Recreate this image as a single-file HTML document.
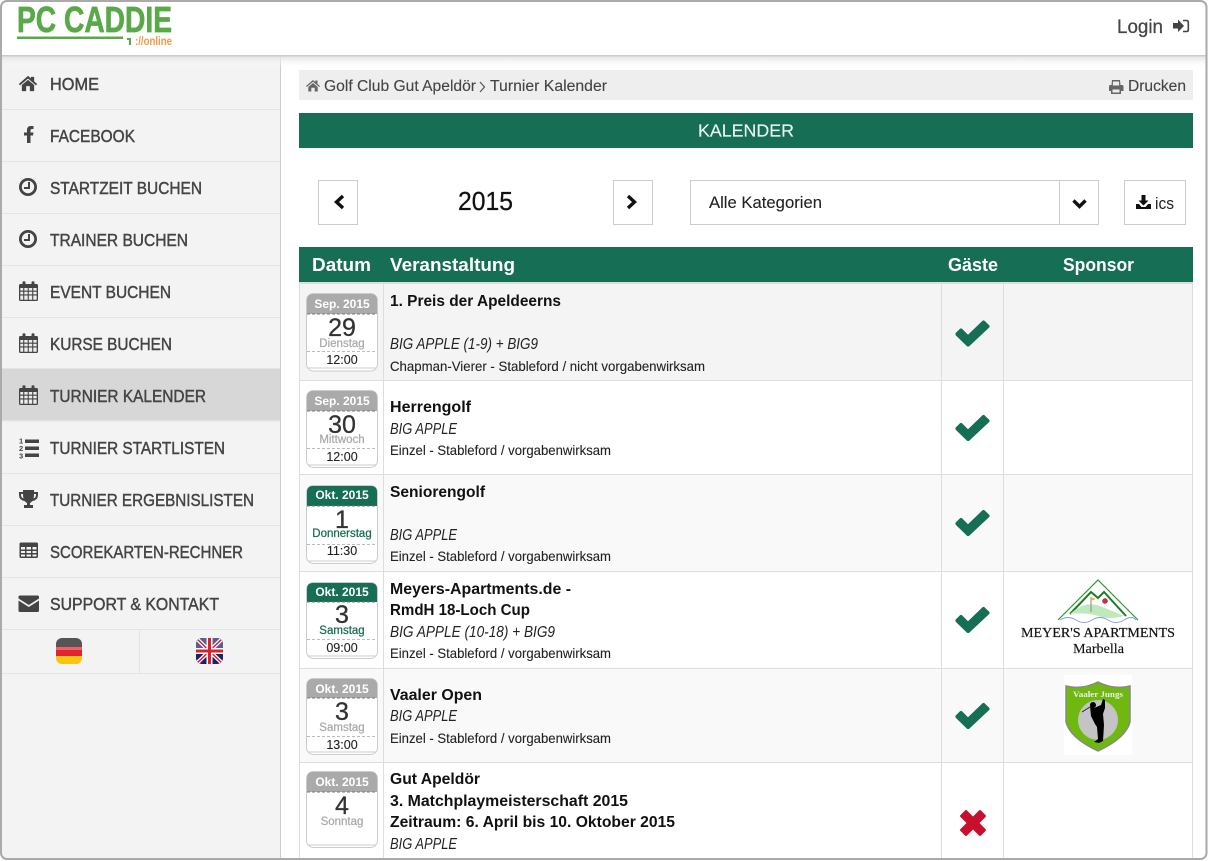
<!DOCTYPE html>
<html lang="de"><head><meta charset="utf-8"><title>Turnier Kalender</title>
<style>
html,body{margin:0;padding:0;background:#fff;overflow:hidden}
svg{display:block}
text{font-family:"Liberation Sans",sans-serif;white-space:pre}
.m{font-size:17.5px;fill:#444;stroke:#444;stroke-width:.45}
.t{font-size:16px;font-weight:bold;fill:#111}
.i{font-size:15.5px;font-style:italic;fill:#222}
.d{font-size:14px;fill:#222;stroke:#222;stroke-width:.1}
.h{font-size:18px;font-weight:bold;fill:#fff}
.ch{font-size:12px;font-weight:bold;fill:#fff;text-anchor:middle}
.cn{font-size:25px;fill:#333;stroke:#333;stroke-width:.3;text-anchor:middle}
.cw{font-size:11.500px;fill:#aaa;stroke:#aaa;stroke-width:.25;text-anchor:middle}
.cg{font-size:11.500px;fill:#166e55;stroke:#166e55;stroke-width:.25;text-anchor:middle}
.ct{font-size:12.500px;fill:#222;stroke:#222;stroke-width:.1;text-anchor:middle}
</style></head><body>
<svg xmlns="http://www.w3.org/2000/svg" width="1208" height="861" viewBox="0 0 1208 861">
<defs>
<linearGradient id="sh" x1="0" y1="0" x2="0" y2="1"><stop offset="0" stop-color="#e2e2e2"/><stop offset="1" stop-color="#fff" stop-opacity="0"/></linearGradient>
<symbol id="cal" viewBox="0 0 19 20" overflow="visible"><path fill="#444" d="M1.500 3H3.500V1.500Q3.500 .3 5 .3T6.500 1.500V3H12.500V1.500Q12.500 .3 14 .3T15.500 1.500V3H17.500Q19 3 19 4.500V18.500Q19 20 17.500 20H1.500Q0 20 0 18.500V4.500Q0 3 1.500 3Z"/><path fill="#ececec" d="M1.300 7H4.200V9.600H1.300ZM5.300 7H8.700V9.600H5.300ZM9.800 7H13.200V9.600H9.800ZM14.300 7H17.700V9.600H14.300ZM1.300 10.700H4.200V13.400H1.300ZM5.300 10.700H8.700V13.400H5.300ZM9.800 10.700H13.200V13.400H9.800ZM14.300 10.700H17.700V13.400H14.300ZM1.300 14.500H4.200V18.700H1.300ZM5.300 14.500H8.700V18.700H5.300ZM9.800 14.500H13.200V18.700H9.800ZM14.300 14.500H17.700V18.700H14.300Z"/></symbol>
<symbol id="chk" viewBox="0 0 35 27" overflow="visible"><path fill="#166e55" d="M.7 13L5 8.800Q6 8 7 8.800L13 14.800L27.500 .8Q28.500 0 29.500 .8L34.300 5.400Q35 6.400 34.300 7.400L14.200 26.200Q13 27 12 26.200L.7 15.200Q0 14 .7 13Z"/></symbol>
<symbol id="clk" viewBox="0 0 18 18" overflow="visible"><circle cx="9" cy="9" r="7.600" fill="none" stroke="#444" stroke-width="2.800"/><path d="M10 4V10H5" fill="none" stroke="#444" stroke-width="2"/></symbol>
</defs>

<rect x="0" y="0" width="1208" height="861" fill="#fff"/>
<!-- sidebar -->
<rect x="2" y="56" width="278" height="804" fill="#f3f3f3"/>
<rect x="280" y="56" width="1" height="804" fill="#ccc"/>
<rect x="2" y="369" width="278" height="51" fill="#d7d7d7"/>
<rect x="2" y="56" width="1204" height="12" fill="url(#sh)"/>
<rect x="2" y="55" width="1204" height="1.500" fill="#ccc"/>
<g fill="#e4e4e4">
<rect x="2" y="109" width="278" height="1"/><rect x="2" y="161" width="278" height="1"/><rect x="2" y="213" width="278" height="1"/><rect x="2" y="265" width="278" height="1"/><rect x="2" y="317" width="278" height="1"/><rect x="2" y="368" width="278" height="1"/><rect x="2" y="420" width="278" height="1.500"/><rect x="2" y="473" width="278" height="1"/><rect x="2" y="525" width="278" height="1"/><rect x="2" y="577" width="278" height="1"/><rect x="2" y="629" width="278" height="1"/><rect x="2" y="673" width="278" height="1"/><rect x="139" y="630" width="1" height="43"/>
</g>

<!-- logo -->
<text x="17" y="32" font-size="36" font-weight="bold" fill="#59a948" stroke="#59a948" stroke-width=".7" textLength="155" lengthAdjust="spacingAndGlyphs">PC CADDIE</text>
<rect x="17" y="36.500" width="106" height="2.500" fill="#59a948"/>
<path d="M127 38H131V45H129V40H127Z" fill="#59a948"/>
<text x="135" y="45" font-size="11.500" font-weight="bold" fill="#ef9a45" textLength="37" lengthAdjust="spacingAndGlyphs">://online</text>

<!-- login -->
<text x="1117" y="33" font-size="19" fill="#444" stroke="#444" stroke-width=".25" textLength="46" lengthAdjust="spacingAndGlyphs">Login</text>
<path fill="#444" d="M1173 23H1178V19.500L1184 26L1178 32V28.500H1173Z"/>
<path fill="none" stroke="#444" stroke-width="1.600" d="M1183 20.500H1186.500Q1188.300 20.500 1188.300 22.300V29.700Q1188.300 31.500 1186.500 31.500H1183"/>

<!-- menu icons -->
<path fill="#444" d="M19 84L28 76L31 78.600V77H34V81.400L37 84L36 85.200L28 78.400L20 85.200ZM22 85L28 80L34 85V91H30V86H26V91H22Z" stroke="#444" stroke-width=".3"/>
<path fill="#444" d="M27 143V135.500H24V132.500H27V130Q27 126 31 126H33.500V129H32Q30.500 129 30.500 130.500V132.500H33.500L33 135.500H30.500V143Z"/>
<use href="#clk" x="19" y="178" width="18" height="18"/>
<use href="#clk" x="19" y="230" width="18" height="18"/>
<use href="#cal" x="19" y="281" width="19" height="20"/>
<use href="#cal" x="19" y="333" width="19" height="20"/>
<use href="#cal" x="19" y="385" width="19" height="20"/>
<path fill="#444" d="M25 439.500H39V443H25ZM25 446.500H39V450H25ZM25 453.500H39V457H25Z"/>
<g font-size="7.500" font-weight="bold" fill="#444"><text x="19" y="443.500">1</text><text x="19" y="451">2</text><text x="19" y="458.500">3</text></g>
<path fill="#444" d="M23 490H34V492H38V495Q38 500 32.500 501Q31 502.500 30 503V505H33V508H24V505H27V503Q26 502.500 24.500 501Q19 500 19 495V492H23ZM21 494V495Q21 497.500 23.500 498.500Q23 496.500 23 494ZM36 494H34Q34 496.500 33.500 498.500Q36 497.500 36 495Z"/>
<path fill="#444" fill-rule="evenodd" d="M21 542.500H36.500Q38 542.500 38 544V556.500Q38 558 36.500 558H21Q19.500 558 19.500 556.500V544Q19.500 542.500 21 542.500ZM21 547V549.500H25V547ZM26.500 547V549.500H31V547ZM32.500 547V549.500H36.500V547ZM21 551V553H25V551ZM26.500 551V553H31V551ZM32.500 551V553H36.500V551ZM21 554.500V556.500H25V554.500ZM26.500 554.500V556.500H31V554.500ZM32.500 554.500V556.500H36.500V554.500Z"/>
<path fill="#444" d="M20 595.500H37.500Q39 595.500 39 597V598.500L28.800 605L18.500 598.500V597Q18.500 595.500 20 595.500ZM18.500 600.500L28.800 607L39 600.500V610.500Q39 612 37.500 612H20Q18.500 612 18.500 610.500Z"/>

<!-- menu text -->
<text class="m" x="50" y="90" textLength="49" lengthAdjust="spacingAndGlyphs">HOME</text>
<text class="m" x="50" y="142" textLength="85" lengthAdjust="spacingAndGlyphs">FACEBOOK</text>
<text class="m" x="50" y="194" textLength="152" lengthAdjust="spacingAndGlyphs">STARTZEIT BUCHEN</text>
<text class="m" x="50" y="246" textLength="138" lengthAdjust="spacingAndGlyphs">TRAINER BUCHEN</text>
<text class="m" x="50" y="298" textLength="121" lengthAdjust="spacingAndGlyphs">EVENT BUCHEN</text>
<text class="m" x="50" y="350" textLength="122" lengthAdjust="spacingAndGlyphs">KURSE BUCHEN</text>
<text class="m" x="50" y="402" textLength="156" lengthAdjust="spacingAndGlyphs">TURNIER KALENDER</text>
<text class="m" x="50" y="454" textLength="175" lengthAdjust="spacingAndGlyphs">TURNIER STARTLISTEN</text>
<text class="m" x="50" y="506" textLength="204" lengthAdjust="spacingAndGlyphs">TURNIER ERGEBNISLISTEN</text>
<text class="m" x="50" y="558" textLength="193" lengthAdjust="spacingAndGlyphs">SCOREKARTEN-RECHNER</text>
<text class="m" x="50" y="610" textLength="169" lengthAdjust="spacingAndGlyphs">SUPPORT &amp; KONTAKT</text>

<!-- flags -->
<clipPath id="f1"><rect x="56" y="638" width="26" height="26" rx="6"/></clipPath>
<g clip-path="url(#f1)"><rect x="56" y="638" width="26" height="9" fill="#555"/><rect x="56" y="647" width="26" height="9" fill="#e0262c"/><rect x="56" y="656" width="26" height="8" fill="#fcc30f"/><rect x="56" y="647" width="26" height="3" fill="#f0606a"/></g>
<clipPath id="f2"><rect x="196" y="638" width="27" height="26" rx="6"/></clipPath>
<g clip-path="url(#f2)"><rect x="196" y="638" width="27" height="26" fill="#1a2368"/><rect x="196" y="638" width="27" height="10" fill="#5a5f90"/><path d="M196 638L223 664M223 638L196 664" stroke="#fff" stroke-width="4"/><path d="M196 638L223 664M223 638L196 664" stroke="#d8202f" stroke-width="1.500"/><rect x="206.500" y="638" width="6" height="26" fill="#fff"/><rect x="196" y="648" width="27" height="6" fill="#fff"/><rect x="208" y="638" width="3" height="26" fill="#d8202f"/><rect x="196" y="649.500" width="27" height="3" fill="#d8202f"/></g>

<!-- breadcrumb -->
<rect x="299" y="70" width="894" height="30" fill="#eee"/>
<path fill="#666" d="M306 86L313 80L315.200 82V80.500H317.500V84L320 86L319.200 87L313 81.800L306.800 87ZM308.300 87L313 83L317.700 87V91.500H314.700V87.800H311.300V91.500H308.300Z"/>
<text x="324" y="91" font-size="15.500" fill="#444" stroke="#444" stroke-width=".12" textLength="152" lengthAdjust="spacingAndGlyphs">Golf Club Gut Apeldör</text>
<path d="M480 82L484.500 87L480 92" fill="none" stroke="#555" stroke-width="1.200"/>
<text x="490" y="91" font-size="15.500" fill="#444" stroke="#444" stroke-width=".12" textLength="117" lengthAdjust="spacingAndGlyphs">Turnier Kalender</text>
<path fill="#666" fill-rule="evenodd" d="M1112 80H1120L1120.500 85H1122Q1123.500 85 1123.500 86.500V91H1121V94H1111V91H1109V86.500Q1109 85 1110.500 85H1111.500ZM1113 81.500L1112.800 85.500H1119.200L1119 81.500ZM1112.500 89.500V92.500H1119.500V89.500Z"/>
<text x="1128" y="91" font-size="15.500" fill="#444" stroke="#444" stroke-width=".12" textLength="58" lengthAdjust="spacingAndGlyphs">Drucken</text>

<!-- title bar -->
<rect x="299" y="113" width="894" height="35" fill="#166e55"/>
<text x="698" y="136.500" font-size="17.500" fill="#eaf3f0" stroke="#eaf3f0" stroke-width=".15" textLength="96" lengthAdjust="spacingAndGlyphs">KALENDER</text>

<!-- controls -->
<g fill="#fff" stroke="#ccc">
<rect x="318.500" y="180.500" width="39" height="44"/>
<rect x="613.500" y="180.500" width="39" height="44"/>
<rect x="690.500" y="180.500" width="408" height="44"/>
<rect x="1124.500" y="180.500" width="61" height="44"/>
</g>
<rect x="1059" y="181" width="1" height="43" fill="#ccc"/>
<path d="M343 196L336.500 202L343 208" fill="none" stroke="#111" stroke-width="3.400"/>
<path d="M628 196L634.500 202L628 208" fill="none" stroke="#111" stroke-width="3.400"/>
<path d="M1073.500 200.500L1079.500 206.500L1085.500 200.500" fill="none" stroke="#111" stroke-width="3.400"/>
<text x="458" y="210" font-size="25.500" fill="#111" stroke="#111" stroke-width=".25" textLength="55" lengthAdjust="spacingAndGlyphs">2015</text>
<text x="709" y="208" font-size="16.500" fill="#222" stroke="#222" stroke-width=".1" textLength="113" lengthAdjust="spacingAndGlyphs">Alle Kategorien</text>
<path fill="#111" d="M1141.500 195H1145.500V200.500H1148.500L1143.500 205.500L1138.500 200.500H1141.500ZM1136 204H1139L1141.500 207H1145.500L1148 204H1151V209H1136Z"/>
<text x="1155" y="209" font-size="16.500" fill="#222" textLength="19" lengthAdjust="spacingAndGlyphs">ics</text>

<!-- table head -->
<rect x="299" y="247" width="894" height="35" fill="#166e55"/>
<text class="h" x="312" y="271" textLength="59" lengthAdjust="spacingAndGlyphs">Datum</text>
<text class="h" x="390" y="271" textLength="125" lengthAdjust="spacingAndGlyphs">Veranstaltung</text>
<text class="h" x="948" y="271" textLength="50" lengthAdjust="spacingAndGlyphs">Gäste</text>
<text class="h" x="1063" y="271" textLength="71" lengthAdjust="spacingAndGlyphs">Sponsor</text>

<!-- rows -->
<rect x="299" y="284" width="894" height="96" fill="#f4f4f4"/>
<rect x="299" y="475" width="894" height="96" fill="#f9f9f9"/>
<rect x="299" y="669" width="894" height="93" fill="#f9f9f9"/>
<g fill="#ddd">
<rect x="299" y="282" width="894" height="2"/><rect x="299" y="380" width="894" height="1"/><rect x="299" y="474" width="894" height="1"/><rect x="299" y="571" width="894" height="1"/><rect x="299" y="668" width="894" height="1"/><rect x="299" y="762" width="894" height="1"/>
<rect x="299" y="284" width="1" height="576"/><rect x="383" y="284" width="1" height="576"/><rect x="941" y="284" width="1" height="576"/><rect x="1003" y="284" width="1" height="576"/><rect x="1192" y="284" width="1" height="576"/>
</g>

<!-- date cards -->
<g stroke="#ccc" fill="#fff">
<rect x="306.500" y="293.500" width="71" height="77.500" rx="7"/>
<rect x="306.500" y="390.500" width="71" height="77" rx="7"/>
<rect x="306.500" y="485.500" width="71" height="78" rx="7"/>
<rect x="306.500" y="582.500" width="71" height="76" rx="7"/>
<rect x="306.500" y="678.500" width="71" height="76" rx="7"/>
<rect x="306.500" y="771.500" width="71" height="76" rx="7"/>
</g>
<g fill="#aaa">
<path d="M307 314V300Q307 294 313 294H371Q377 294 377 300V314Z"/>
<path d="M307 411V397Q307 391 313 391H371Q377 391 377 397V411Z"/>
<path d="M307 698V685Q307 679 313 679H371Q377 679 377 685V698Z"/>
<path d="M307 792V778Q307 772 313 772H371Q377 772 377 778V792Z"/>
</g>
<g fill="#166e55">
<path d="M307 506V492Q307 486 313 486H371Q377 486 377 492V506Z"/>
<path d="M307 602V589Q307 583 313 583H371Q377 583 377 589V602Z"/>
</g>
<g stroke="#777" stroke-dasharray="3 2" fill="none">
<path d="M307 314H377M307 411H377M307 506H377M307 602H377M307 698H377M307 792H377"/>
</g>
<g stroke="#bbb" stroke-dasharray="3 2" fill="none">
<path d="M307 351.500H377M307 448.500H377M307 544.500H377M307 639.500H377M307 736.500H377"/>
</g>
<g stroke="#ccc" fill="none">
<path d="M308 368H376M308 465H376M308 561H376M308 656H376M308 752H376M308 845H376"/>
</g>

<text class="ch" x="342" y="308">Sep. 2015</text><text class="cn" x="342" y="336">29</text><text class="cw" x="342" y="347">Dienstag</text><text class="ct" x="342" y="364">12:00</text>
<text class="ch" x="342" y="405">Sep. 2015</text><text class="cn" x="342" y="433">30</text><text class="cw" x="342" y="443">Mittwoch</text><text class="ct" x="342" y="461">12:00</text>
<text class="ch" x="342" y="499">Okt. 2015</text><text class="cn" x="342" y="528">1</text><text class="cg" x="342" y="537">Donnerstag</text><text class="ct" x="342" y="555">11:30</text>
<text class="ch" x="342" y="596">Okt. 2015</text><text class="cn" x="342" y="623">3</text><text class="cg" x="342" y="634">Samstag</text><text class="ct" x="342" y="652">09:00</text>
<text class="ch" x="342" y="693">Okt. 2015</text><text class="cn" x="342" y="720">3</text><text class="cw" x="342" y="731">Samstag</text><text class="ct" x="342" y="749">13:00</text>
<text class="ch" x="342" y="786">Okt. 2015</text><text class="cn" x="342" y="814">4</text><text class="cw" x="342" y="825">Sonntag</text>

<!-- row text -->
<text class="t" x="390" y="306" textLength="171" lengthAdjust="spacingAndGlyphs">1. Preis der Apeldeerns</text>
<text class="i" x="390" y="349" textLength="148" lengthAdjust="spacingAndGlyphs">BIG APPLE (1-9) + BIG9</text>
<text class="d" x="390" y="371" textLength="315" lengthAdjust="spacingAndGlyphs">Chapman-Vierer - Stableford / nicht vorgabenwirksam</text>

<text class="t" x="390" y="412" textLength="81" lengthAdjust="spacingAndGlyphs">Herrengolf</text>
<text class="i" x="390" y="434" textLength="67" lengthAdjust="spacingAndGlyphs">BIG APPLE</text>
<text class="d" x="390" y="455" textLength="221" lengthAdjust="spacingAndGlyphs">Einzel - Stableford / vorgabenwirksam</text>

<text class="t" x="390" y="497" textLength="95" lengthAdjust="spacingAndGlyphs">Seniorengolf</text>
<text class="i" x="390" y="540" textLength="67" lengthAdjust="spacingAndGlyphs">BIG APPLE</text>
<text class="d" x="390" y="561" textLength="221" lengthAdjust="spacingAndGlyphs">Einzel - Stableford / vorgabenwirksam</text>

<text class="t" x="390" y="594" textLength="181" lengthAdjust="spacingAndGlyphs">Meyers-Apartments.de -</text>
<text class="t" x="390" y="615" textLength="140" lengthAdjust="spacingAndGlyphs">RmdH 18-Loch Cup</text>
<text class="i" x="390" y="637" textLength="165" lengthAdjust="spacingAndGlyphs">BIG APPLE (10-18) + BIG9</text>
<text class="d" x="390" y="658" textLength="221" lengthAdjust="spacingAndGlyphs">Einzel - Stableford / vorgabenwirksam</text>

<text class="t" x="390" y="700" textLength="92" lengthAdjust="spacingAndGlyphs">Vaaler Open</text>
<text class="i" x="390" y="721" textLength="67" lengthAdjust="spacingAndGlyphs">BIG APPLE</text>
<text class="d" x="390" y="743" textLength="221" lengthAdjust="spacingAndGlyphs">Einzel - Stableford / vorgabenwirksam</text>

<text class="t" x="390" y="784" textLength="90" lengthAdjust="spacingAndGlyphs">Gut Apeldör</text>
<text class="t" x="390" y="806" textLength="238" lengthAdjust="spacingAndGlyphs">3. Matchplaymeisterschaft 2015</text>
<text class="t" x="390" y="827" textLength="285" lengthAdjust="spacingAndGlyphs">Zeitraum: 6. April bis 10. Oktober 2015</text>
<text class="i" x="390" y="849" textLength="67" lengthAdjust="spacingAndGlyphs">BIG APPLE</text>

<!-- marks -->
<use href="#chk" x="955" y="320" width="35" height="27"/>
<use href="#chk" x="955" y="414.500" width="35" height="27"/>
<use href="#chk" x="955" y="509.500" width="35" height="27"/>
<use href="#chk" x="955" y="606.500" width="35" height="27"/>
<use href="#chk" x="955" y="702.500" width="35" height="27"/>
<path fill="#c8102e" d="M960.500 815L965 810.500Q966 809.500 967 810.500L973 816.500L979 810.500Q980 809.500 981 810.500L985.500 815Q986.500 816 985.500 817L979.500 823L985.500 829Q986.500 830 985.500 831L981 835.500Q980 836.500 979 835.500L973 829.500L967 835.500Q966 836.500 965 835.500L960.500 831Q959.500 830 960.500 829L966.500 823L960.500 817Q959.500 816 960.500 815Z"/>

<!-- sponsor 1 -->
<path d="M1058 620L1098 580L1138 620" fill="none" stroke="#2c9a2c" stroke-width="1.200"/>
<path d="M1070 614L1091 592L1098 598L1104 592L1126 616" fill="none" stroke="#1f7a2c" stroke-width="2"/>
<path d="M1070 614Q1085 600 1100 606T1124 616Q1110 620 1098 616T1070 614Z" fill="#bfe8bb"/>
<path d="M1091 597V612" stroke="#888" stroke-width="1"/><path d="M1091 597L1096 599L1091 601Z" fill="#d8c040"/>
<circle cx="1105" cy="601" r="2.500" fill="#e8233a" stroke="#333" stroke-width=".5"/>
<path d="M1060 620Q1068 615 1076 620T1092 620T1108 620T1124 620T1136 620" fill="none" stroke="#7f9fe8" stroke-width="1"/>
<text x="1021" y="637" font-size="14" fill="#111" stroke="#111" stroke-width=".2" style="font-family:'Liberation Serif',serif" textLength="154" lengthAdjust="spacingAndGlyphs">MEYER'S APARTMENTS</text>
<text x="1073" y="653" font-size="13.500" fill="#111" stroke="#111" stroke-width=".15" style="font-family:'Liberation Serif',serif" textLength="51" lengthAdjust="spacingAndGlyphs">Marbella</text>

<!-- sponsor 2 -->
<rect x="1064" y="675" width="68" height="80" fill="#fff"/>
<path d="M1066 686Q1082 690 1098 682Q1114 690 1130 686V722Q1126 738 1098 751Q1070 738 1066 722Z" fill="#6fb80f" stroke="#888" stroke-width="1.500"/>
<text x="1073" y="697" font-size="8" font-weight="bold" fill="#eee" style="font-family:'Liberation Serif',serif" textLength="50" lengthAdjust="spacingAndGlyphs">Vaaler Jungs</text>
<circle cx="1098" cy="720" r="20" fill="#c4c4c4"/>
<path d="M1090 706L1094 708L1101 705L1103 699L1105 700L1105 708L1103 714L1104 725L1103 741L1099 743L1094 742L1098 739L1097 727L1095 724L1091 716Z" fill="#000"/>
<circle cx="1093" cy="705" r="3" fill="#000"/>
<path d="M1090 707L1082 712" stroke="#222" stroke-width="1"/>

<!-- outer frame -->
<rect x="1" y="1" width="1205.500" height="858" rx="6" fill="none" stroke="#aaa" stroke-width="2"/>
</svg>
</body></html>
